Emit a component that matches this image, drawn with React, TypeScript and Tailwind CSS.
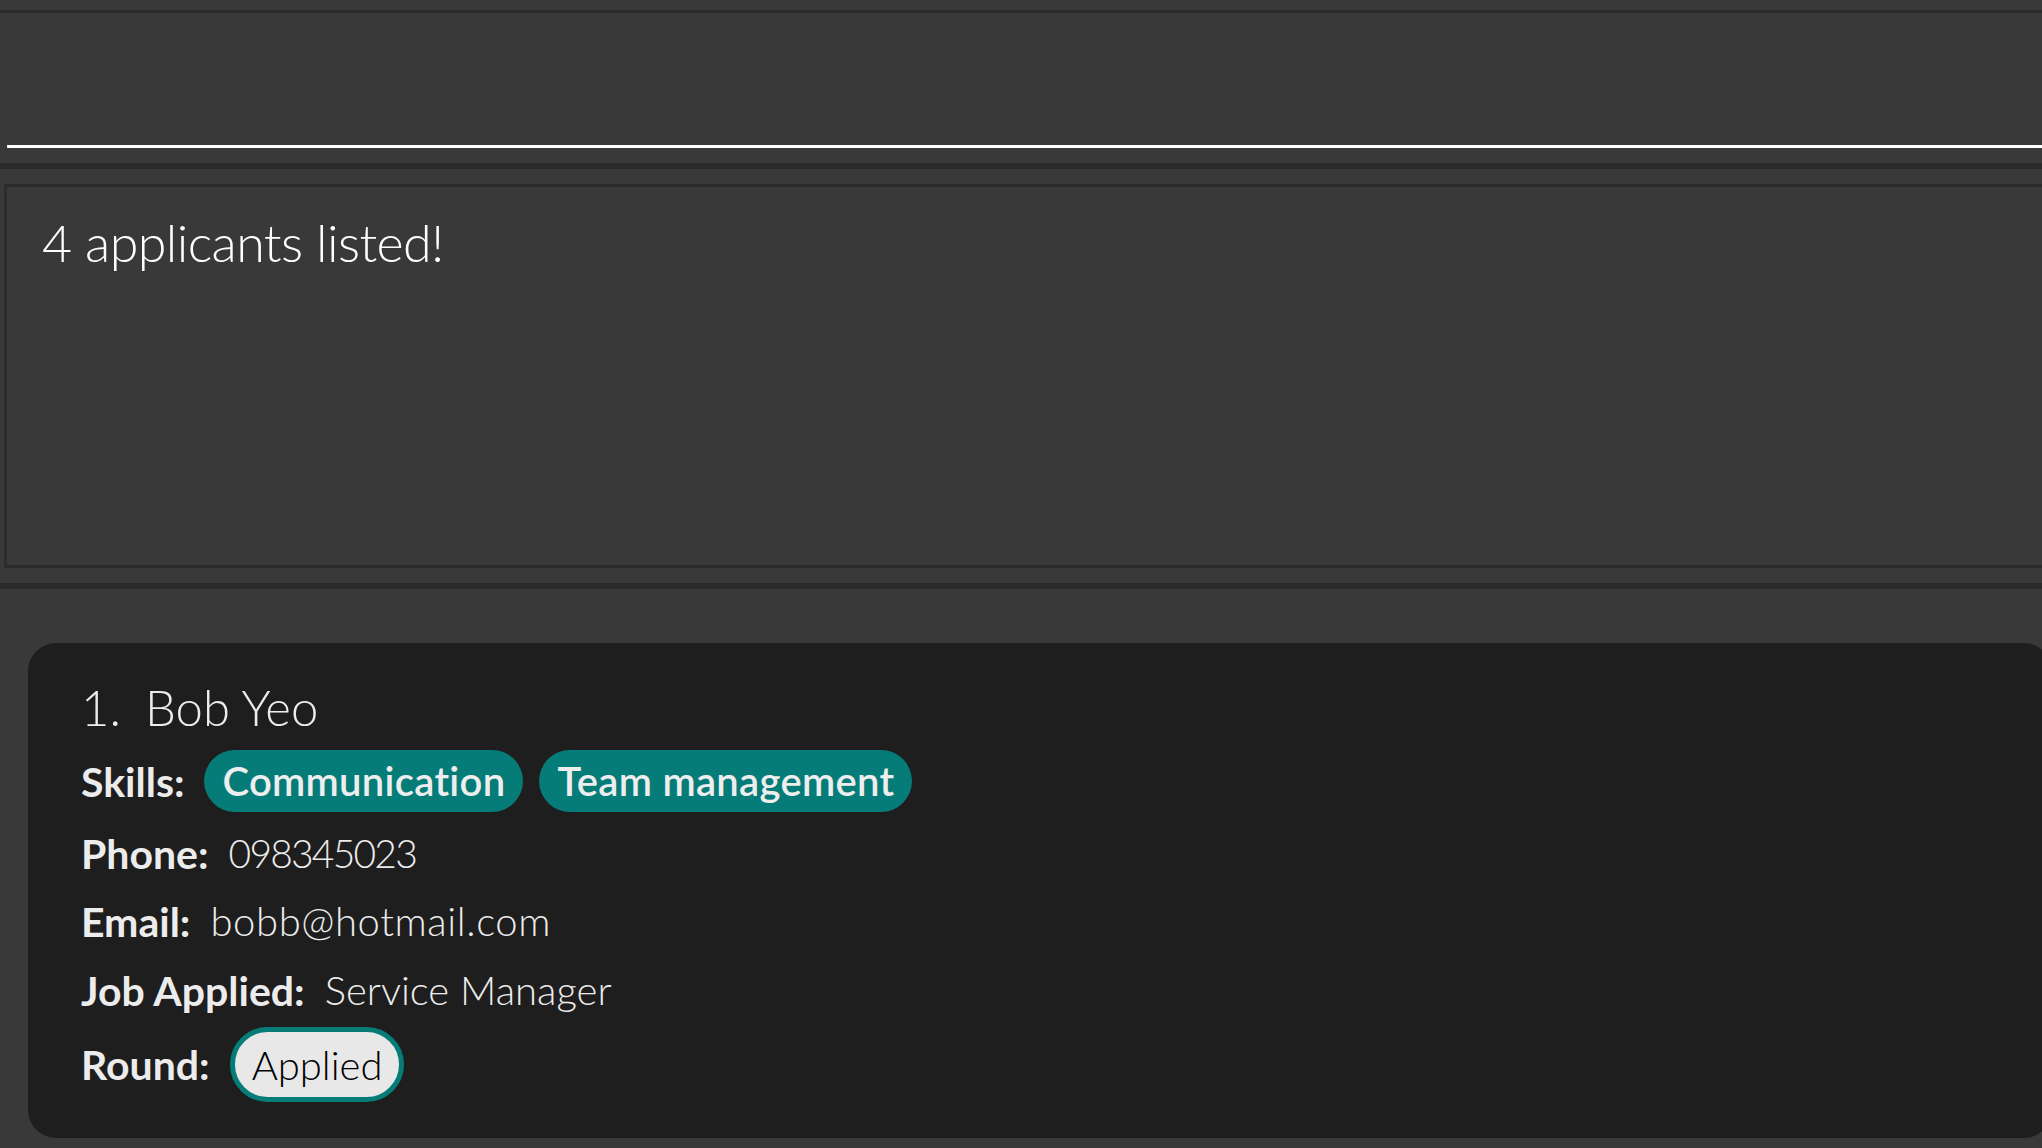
import React from 'react';

interface Applicant {
  id: number;
  name: string;
  skills: string[];
  phone: string;
  email: string;
  job: string;
  round: string;
}

const applicant: Applicant = {
  id: 1,
  name: 'Bob Yeo',
  skills: ['Communication', 'Team management'],
  phone: '098345023',
  email: 'bobb@hotmail.com',
  job: 'Service Manager',
  round: 'Applied',
};

// one labelled row of the applicant card
const Field: React.FC<{ label: string; className: string; children: React.ReactNode }> = ({
  label,
  className,
  children,
}) => (
  <div className={`flex items-center gap-[20px] ${className}`}>
    <span className="text-[41px] font-bold leading-none text-[#ececec]">{label}</span>
    {children}
  </div>
);

const ApplicantCard: React.FC<{ a: Applicant }> = ({ a }) => (
  <div className="ml-[28px] w-[2024px] h-[495px] shrink-0 rounded-[28px] bg-[#1e1e1e] pl-[53px] pt-[27px] flex flex-col">
    <div className="h-[74px] flex items-center text-[49px] font-light leading-none text-[#ececec]">
      <span className="w-[64px]">{a.id}.</span>
      <span>{a.name}</span>
    </div>

    <Field label="Skills:" className="h-[74px]">
      <div className="flex gap-[16px]">
        {a.skills.map((s) => (
          <span
            key={s}
            className="h-[62px] px-[18px] rounded-full bg-[#067c79] flex items-center text-[40px] font-semibold leading-none tracking-[0.3px] text-[#eeeeee]"
          >
            {s}
          </span>
        ))}
      </div>
    </Field>

    <Field label="Phone:" className="h-[71px]">
      <span className="text-[39px] font-light leading-none tracking-[-1.8px] text-[#ececec]">{a.phone}</span>
    </Field>

    <Field label="Email:" className="h-[64px]">
      <span className="text-[40px] font-light leading-none tracking-[0.6px] text-[#ececec]">{a.email}</span>
    </Field>

    <Field label="Job Applied:" className="h-[74px]">
      <span className="text-[40px] font-light leading-none text-[#ececec]">{a.job}</span>
    </Field>

    <Field label="Round:" className="h-[75px]">
      <span className="h-[75px] px-[17px] rounded-full border-[5px] border-[#067c79] bg-[#e8e8e8] flex items-center text-[40px] font-light leading-none text-black">
        {a.round}
      </span>
    </Field>
  </div>
);

export default function App() {
  return (
    <div className="w-[2042px] h-[1148px] overflow-hidden bg-[#393939] flex flex-col font-['Lato','Open_Sans',sans-serif]">
      {/* top strip */}
      <div className="h-[10px] shrink-0" />
      <div className="h-[3px] shrink-0 bg-[#2b2b2b]" />

      {/* command box */}
      <div className="h-[150px] shrink-0 flex flex-col justify-end pl-[7px] pb-[15px]">
        <div className="h-[3px] bg-white" />
      </div>

      <div className="h-[6px] shrink-0 bg-[#2b2b2b]" />

      {/* result display */}
      <div className="h-[414px] shrink-0 pt-[15px] pb-[15px] pl-[4px]">
        <div className="h-full w-[2080px] border-[3px] border-[#2b2b2b] pl-[35px] pt-[29px]">
          <p className="text-[52px] font-light leading-none tracking-[-0.6px] text-white">4 applicants listed!</p>
        </div>
      </div>

      <div className="h-[6px] shrink-0 bg-[#2b2b2b]" />

      {/* applicant list */}
      <div className="flex-1 pt-[54px] overflow-hidden">
        <ApplicantCard a={applicant} />
      </div>
    </div>
  );
}
